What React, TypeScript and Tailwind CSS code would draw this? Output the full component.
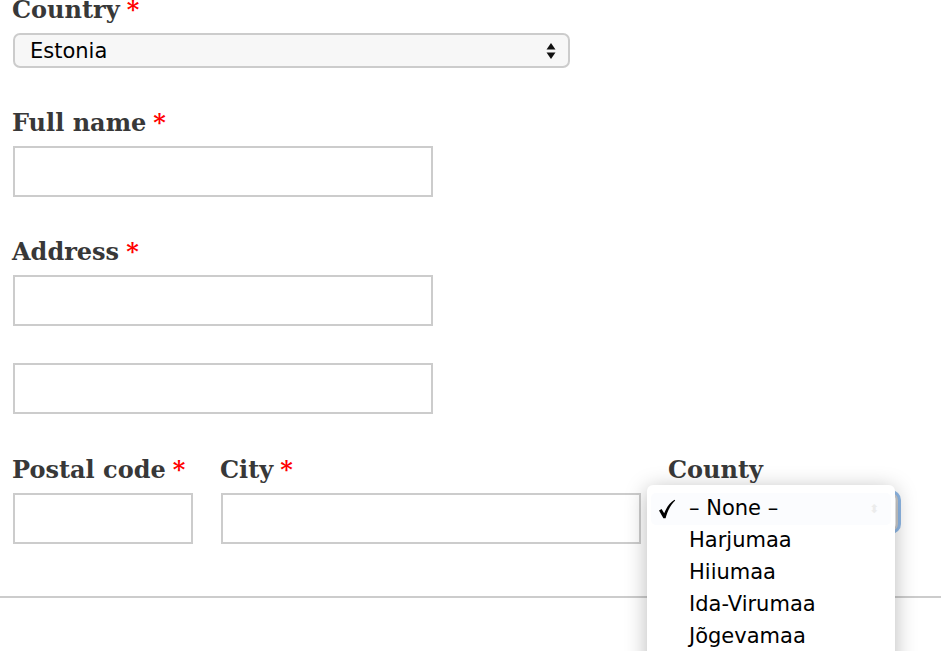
import React from 'react'

function Label({ text, required }: { text: string; required?: boolean }) {
  return (
    <div className="h-[30px] leading-[30px] text-[24px] font-bold text-[#383838] whitespace-nowrap [font-family:'DejaVu_Serif',serif]">
      {text}
      {required && <span className="ml-[7px] text-[#ff0000]">*</span>}
    </div>
  )
}

function TextInput({ width }: { width: string }) {
  return <div className={`${width} h-[51px] border-2 border-[#cccccc] bg-white`} />
}

const counties = ['Harjumaa', 'Hiiumaa', 'Ida-Virumaa', 'Jõgevamaa', 'Järvamaa']

export default function App() {
  return (
    <div className="relative h-[651px] w-[941px] overflow-hidden bg-white">
      <div className="-mt-[5px] pl-[12px]">
        {/* Country */}
        <Label text="Country" required />
        <div className="mt-[8px] ml-[1px] flex h-[35px] w-[557px] items-center justify-between rounded-[7px] border-2 border-[#cccccc] bg-[#f7f7f7] pl-[15px] pr-[12px] pt-[3px] text-[21px] text-black [font-family:'DejaVu_Sans',sans-serif]">
          <span>Estonia</span>
          <svg width="10" height="18" viewBox="0 0 10 18" className="-mt-[3px]">
            <path d="M5 1 L9.5 7.5 L0.5 7.5 Z" fill="#111" />
            <path d="M5 17 L9.5 10.5 L0.5 10.5 Z" fill="#111" />
          </svg>
        </div>

        {/* Full name */}
        <div className="mt-[40px]">
          <Label text="Full name" required />
          <div className="mt-[8px] ml-[1px]">
            <TextInput width="w-[420px]" />
          </div>
        </div>

        {/* Address */}
        <div className="mt-[40px]">
          <Label text="Address" required />
          <div className="mt-[8px] ml-[1px] flex flex-col gap-[37px]">
            <TextInput width="w-[420px]" />
            <TextInput width="w-[420px]" />
          </div>
        </div>

        {/* Postal code / City / County */}
        <div className="mt-[41px] flex">
          <div className="w-[208px]">
            <Label text="Postal code" required />
            <div className="mt-[8px] ml-[1px]">
              <TextInput width="w-[180px]" />
            </div>
          </div>
          <div className="w-[448px]">
            <Label text="City" required />
            <div className="mt-[8px] ml-[1px]">
              <TextInput width="w-[420px]" />
            </div>
          </div>
          <div>
            <Label text="County" />
            <div className="mt-[8px] h-[38px] w-[230px] rounded-[7px] border-2 border-[#cccccc] bg-[#f7f7f7] shadow-[0_0_0_3px_#8fb8e6]" />
          </div>
        </div>
      </div>

      <div className="mt-[52px] h-[2px] w-full bg-[#cccccc]" />

      {/* County dropdown, opened */}
      <div className="absolute left-[647px] top-[485px] h-[200px] w-[248px] rounded-t-[6px] bg-white pt-[8px] shadow-[0_4px_22px_rgba(0,0,0,0.28)] [font-family:'DejaVu_Sans',sans-serif] text-[21px] text-black">
        <div className="relative mx-[4px] flex h-[32px] items-center rounded-[5px] bg-[#fbfcfe]">
          <span className="flex w-[38px] pl-[7px]">
            <svg width="18" height="20" viewBox="0 0 18 20">
              <path d="M1 11.5 L3.6 10 L6.2 14.2 C8.6 8.4 11.8 3.6 16.5 0.8 L17.2 1.6 C12.8 5.6 9.6 11.6 7.6 19.2 L5.4 19.2 Z" fill="#000" />
            </svg>
          </span>
          <span>– None –</span>
          <span className="absolute right-[12px] text-[12px] text-[#ececec]">⬍</span>
        </div>
        {counties.map((c) => (
          <div key={c} className="flex h-[32px] items-center pl-[42px]">
            {c}
          </div>
        ))}
      </div>
    </div>
  )
}
